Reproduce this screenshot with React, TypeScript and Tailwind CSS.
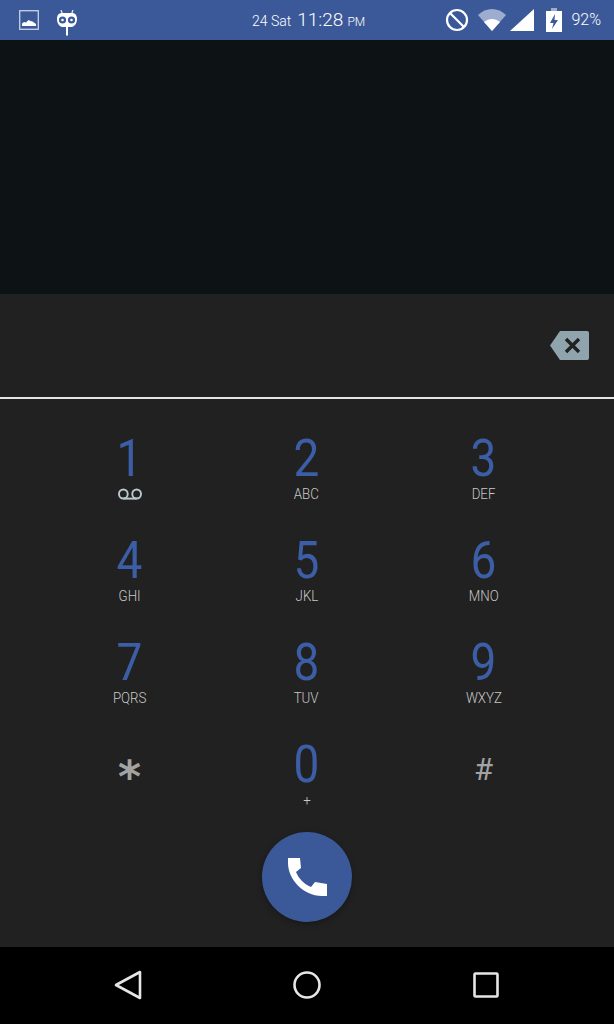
const KEYS = [
  { digit: "1", sub: "voicemail" },
  { digit: "2", sub: "ABC" },
  { digit: "3", sub: "DEF" },
  { digit: "4", sub: "GHI" },
  { digit: "5", sub: "JKL" },
  { digit: "6", sub: "MNO" },
  { digit: "7", sub: "PQRS" },
  { digit: "8", sub: "TUV" },
  { digit: "9", sub: "WXYZ" },
  { digit: "*", sub: "" },
  { digit: "0", sub: "+" },
  { digit: "#", sub: "" },
];

function Voicemail() {
  return (
    <svg width="28" height="12" viewBox="0 0 28 12" fill="none" stroke="#b9c9cd" strokeWidth="2">
      <circle cx="7" cy="6" r="4.6" />
      <circle cx="21" cy="6" r="4.6" />
      <path d="M7 10.6h14" />
    </svg>
  );
}

function DialKey({ digit, sub }: { digit: string; sub: string }) {
  return (
    <div className="flex h-[102px] flex-col items-center">
      {digit === "*" && (
        <div className="h-[62px] font-['DejaVu_Sans',sans-serif] text-[44px] font-bold leading-[94px] text-[#a3a3a3]">
          {digit}
        </div>
      )}
      {digit === "#" && (
        <div className="h-[62px] text-[31px] font-normal leading-[79px] text-[#a3a3a3]">{digit}</div>
      )}
      {digit !== "*" && digit !== "#" && (
        <div className="h-[62px] scale-x-90 text-[51px] font-normal leading-[70px] text-[#3b5ea6]">{digit}</div>
      )}
      <div className="flex h-[16px] scale-x-95 items-center text-[14px] font-light leading-none text-[#c8c8c8]">
        {sub === "voicemail" ? <Voicemail /> : sub}
      </div>
    </div>
  );
}

export default function App() {
  return (
    <div className="flex h-[1024px] w-[614px] flex-col overflow-hidden bg-black font-['Roboto',sans-serif]">
      {/* status bar */}
      <div className="flex h-10 items-center whitespace-nowrap bg-[#3b5998] text-white">
        <div className="flex w-[240px] items-center gap-[18px] pl-[19px]">
          <svg width="20" height="20" viewBox="0 0 20 20">
            <rect x="0.700" y="0.700" width="18.600" height="18.600" fill="none" stroke="#c9d2e4" strokeWidth="1.300" />
            <path d="M3 16v-2.500l2-1.500 2 .5 2.500-2.500 2 1 2 .5 3.500 2.500V16z" fill="#fff" />
          </svg>
          <svg className="mt-[5px]" width="20" height="26" viewBox="0 0 20 26">
            <path d="M4 0l1.500 4M16 0l-1.500 4" stroke="#e6eaf3" strokeWidth="1.200" />
            <path d="M5 3h10c3 0 5 2 5 6s-2 7-5 8h-4v8.500H9V17H5C2 16 0 13 0 9s2-6 5-6z" fill="#fff" />
            <circle cx="5.500" cy="10" r="3.600" fill="#3b5998" />
            <circle cx="14.500" cy="10" r="3.600" fill="#3b5998" />
            <circle cx="5.500" cy="10" r="1.300" fill="#fff" />
            <circle cx="14.500" cy="10" r="1.300" fill="#fff" />
          </svg>
        </div>
        <div className="flex items-baseline text-white">
          <span className="ml-[12px] text-[14px] font-light">24 Sat</span>
          <span className="ml-[6px] text-[19px] font-light">11:28</span>
          <span className="ml-[4px] text-[12px] font-light">PM</span>
        </div>
        <div className="ml-auto flex items-center pr-[13px]">
          <svg width="24" height="24" viewBox="0 0 24 24" fill="none" stroke="#fff" strokeWidth="2.200">
            <circle cx="12" cy="12" r="10" />
            <path d="M5 5l14 14" />
          </svg>
          <svg className="ml-[9px]" width="28" height="22" viewBox="0 0 28 22">
            <path d="M0 6c8-8 20-8 28 0L14 22z" fill="#9cadcf" />
            <path d="M6 13c5-4 11-4 16 0l-8 9z" fill="#fff" />
          </svg>
          <svg className="ml-[4px]" width="24" height="22" viewBox="0 0 24 22">
            <path d="M0 22L24 0v22z" fill="#fff" />
          </svg>
          <svg className="ml-[12px]" width="16" height="24" viewBox="0 0 16 24">
            <path d="M5 0h6v3H5z" fill="#9cadcf" />
            <path d="M0 3h16v21H0z" fill="#fff" />
            <path d="M9 6l-5 9h3.500L6 21l6-9H8.500z" fill="#3b5998" />
          </svg>
          <span className="ml-[9px] text-[16px] font-light">92%</span>
        </div>
      </div>

      {/* call log area, empty */}
      <div className="h-[254px] bg-[#0d1214]" />

      {/* number input */}
      <div className="flex h-[105px] items-start justify-end border-b-[2px] border-[#e4e4e4] bg-[#212121] pr-[25px] pt-[37px]">
        <svg width="39" height="29" viewBox="0 0 39 29">
          <path d="M10 0h27a2 2 0 0 1 2 2v25a2 2 0 0 1-2 2H10L0 14.500z" fill="#90a4ae" />
          <path d="M16 8l13 13M29 8L16 21" stroke="#212121" strokeWidth="3.400" fill="none" />
        </svg>
      </div>

      {/* keypad */}
      <div className="relative flex-1 bg-[#212121]">
        <div className="grid grid-cols-[177px_177px_177px] pl-[41px] pt-[25px]">
          {KEYS.map((k) => (
            <DialKey key={k.digit} digit={k.digit} sub={k.sub} />
          ))}
        </div>
        <button className="absolute left-[262px] top-[433px] flex h-[90px] w-[90px] items-center justify-center rounded-full bg-[#3b5998] shadow-[0_2px_6px_rgba(0,0,0,0.3)]">
          <svg width="40" height="40" viewBox="0 0 40 40">
            <path d="M1 1h12l1 10-5 4c3 7 8 12 15 15l4-5 12 2v12h-5C16 39 1 22 1 6z" fill="#fff" />
          </svg>
        </button>
      </div>

      {/* nav bar */}
      <div className="flex h-[77px] items-center bg-black pb-[1px]">
        <svg className="ml-[114px]" width="28" height="30" viewBox="0 0 28 30" fill="none" stroke="#e6e6e6" strokeWidth="2.600" strokeLinejoin="round">
          <path d="M26 2v26L2 15z" />
        </svg>
        <svg className="ml-[151px]" width="28" height="28" viewBox="0 0 28 28" fill="none" stroke="#e6e6e6" strokeWidth="2.600">
          <circle cx="14" cy="14" r="12.500" />
        </svg>
        <svg className="ml-[152px]" width="26" height="26" viewBox="0 0 26 26" fill="none" stroke="#e6e6e6" strokeWidth="2.600" strokeLinejoin="round">
          <rect x="1.500" y="1.500" width="23" height="23" rx="1" />
        </svg>
      </div>
    </div>
  );
}
